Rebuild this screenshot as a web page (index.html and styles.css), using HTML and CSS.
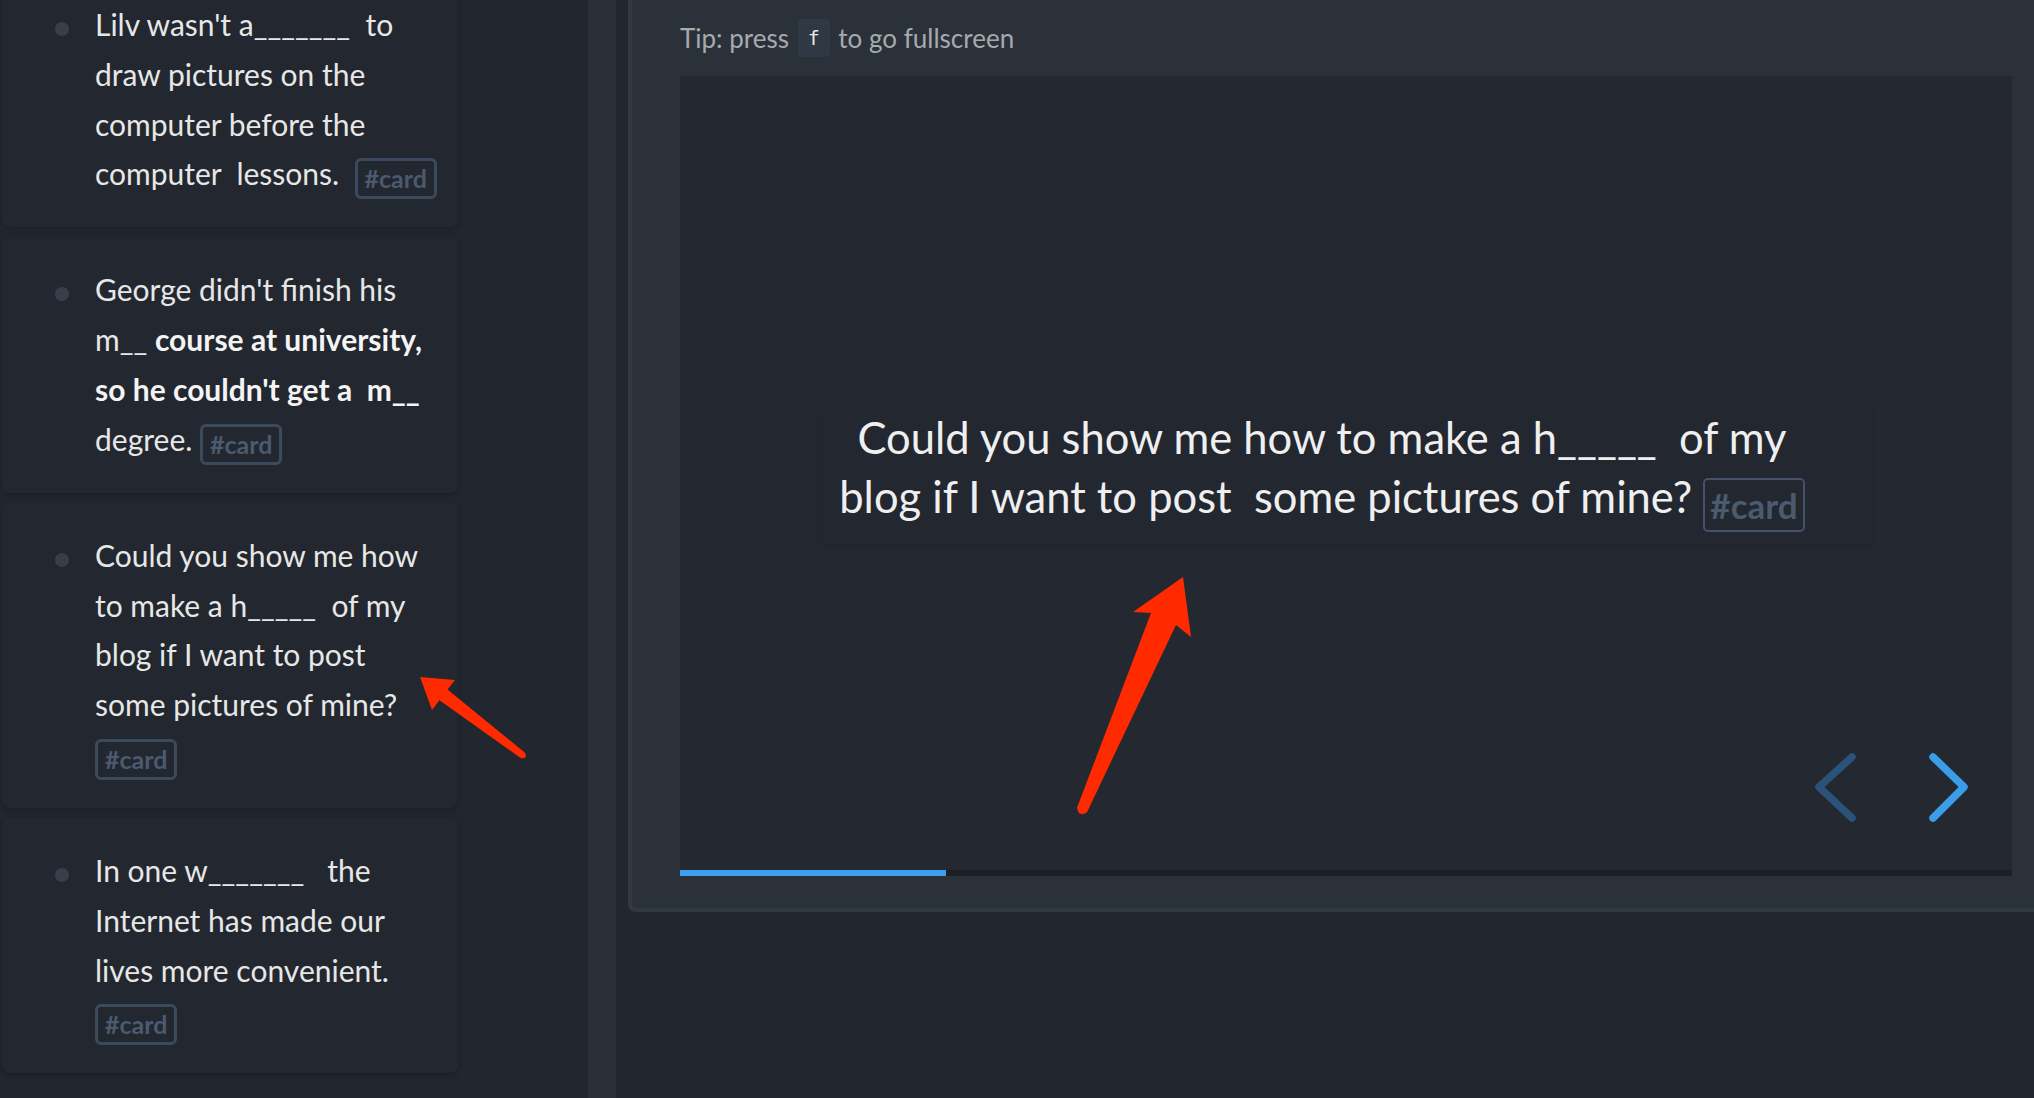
FILE: index.html
```html
<!DOCTYPE html>
<html lang="en">
<head>
<meta charset="utf-8">
<title>Flashcards</title>
<link rel="stylesheet" href="styles.css">
</head>
<body>
<div class="app">
  <aside class="sidebar">
    <div class="cards">
      <div class="card">
        <span class="bullet"></span>
        <div class="block-text">Lilv wasn't a_______  to draw pictures on the computer before the computer  lessons.  <span class="tag">#card</span></div>
      </div>
      <div class="card">
        <span class="bullet"></span>
        <div class="block-text">George didn't finish his m__ <b>course at university, so he couldn't get a  m__</b> degree. <span class="tag">#card</span></div>
      </div>
      <div class="card">
        <span class="bullet"></span>
        <div class="block-text">Could you show me how to make a h_____  of my blog if I want to post  some pictures of mine? <span class="tag">#card</span></div>
      </div>
      <div class="card">
        <span class="bullet"></span>
        <div class="block-text">In one w_______   the Internet has made our lives more convenient. <span class="tag">#card</span></div>
      </div>
    </div>
  </aside>
  <div class="rail"></div>
  <div class="gutter"></div>
  <main class="panel">
    <div class="tip">Tip: press <kbd>f</kbd> to go fullscreen</div>
    <section class="slide">
      <div class="stage">
        <div class="qcard"><div class="qtext">Could you show me how to make a h_____  of my blog if I want to post  some pictures of mine? <span class="tag tag-lg">#card</span></div></div>
      </div>
      <div class="progress"><div class="bar" style="width:20%"></div></div>
      <div class="nav">
        <svg class="nav-btn prev" width="48" height="72" viewBox="0 0 48 72"><path d="M40 6 L7 36 L40 67"/></svg>
        <svg class="nav-btn next" width="48" height="72" viewBox="0 0 48 72"><path d="M7 6 L38 36 L7 67"/></svg>
      </div>
    </section>
  </main>
</div>
<svg class="annotations" width="2034" height="1098" viewBox="0 0 2034 1098">
  <path d="M420 677 L455 680 L447.5 689.5 L525 752.7 Q528 758.5 521 758.3 L439.5 700.2 L432 710 Z"/>
  <path d="M1183 577 L1191 637 L1176 625 L1087 812.2 Q1079 818 1077 807.8 L1151 613 L1133 612 Z"/>
</svg>
</body>
</html>
```
FILE: styles.css
```css
* { box-sizing: border-box; }
html, body { margin: 0; padding: 0; }
body {
  width: 2034px;
  height: 1098px;
  overflow: hidden;
  position: relative;
  background: #22262e;
  font-family: Lato, "Open Sans", sans-serif;
}
.app {
  display: grid;
  grid-template-columns: 588px 28px 12px 1432px;
  height: 1098px;
  overflow: hidden;
}
.sidebar { background: #22262e; overflow: hidden; }
.cards {
  margin-top: -28px;
  padding-left: 2px;
  display: flex;
  flex-direction: column;
  gap: 10px;
}
.card {
  width: 456px;
  background: #23272f;
  border-radius: 8px;
  box-shadow: 0 2px 6px rgba(0, 0, 0, 0.22);
  padding: 28px 0;
  display: flex;
  align-items: flex-start;
}
.bullet {
  flex: none;
  width: 14px;
  height: 14px;
  border-radius: 50%;
  background: #37404a;
  margin: 22px 0 0 53px;
}
.block-text {
  margin-left: 26px;
  width: 348px;
  font-size: 30px;
  line-height: 49.8px;
  color: #e7e7e7;
  white-space: pre-wrap;
}
.block-text b { font-weight: 700; color: #f4f4f4; }
.tag {
  display: inline-block;
  border: 3px solid #3c4a5d;
  border-radius: 6px;
  color: #4a5a6f;
  font-weight: 700;
  font-size: 25px;
  line-height: 35px;
  padding: 0 7px;
  vertical-align: -3px;
  white-space: nowrap;
}
.rail { background: #2a3038; }
.gutter { background: #22262e; }
.panel {
  align-self: start;
  background: #2b3139;
  border-left: 4px solid #313943;
  border-bottom: 4px solid #313943;
  border-bottom-left-radius: 8px;
  padding: 0 48px 32px;
}
.tip {
  height: 76px;
  display: flex;
  align-items: center;
  font-size: 26px;
  color: #a6aaaf;
  white-space: pre;
}
kbd {
  display: inline-block;
  height: 38px;
  line-height: 38px;
  padding: 0 10px;
  margin: 0 2px;
  background: #2f3843;
  border-radius: 4px;
  font-family: "DejaVu Sans Mono", monospace;
  font-size: 20px;
  color: #e8e8e8;
}
.slide {
  position: relative;
  width: 1332px;
  height: 800px;
  background: #242831;
  display: flex;
  flex-direction: column;
}
.stage {
  flex: 1;
  display: flex;
  align-items: center;
  justify-content: center;
  padding-top: 7px;
}
.qcard {
  width: 1053px;
  height: 137px;
  background: #23272f;
  box-shadow: 0 2px 5px rgba(0, 0, 0, 0.12);
  padding: 0 58px 0 10px;
}
.qtext {
  font-size: 43.5px;
  line-height: 59px;
  color: #efefef;
  text-align: center;
  white-space: pre-wrap;
}
.tag-lg {
  border-width: 2px;
  border-color: #43526a;
  border-radius: 5px;
  font-size: 35px;
  line-height: 50px;
  padding: 0 5px;
  vertical-align: -6px;
}
.progress { height: 6px; background: #1c1f26; }
.bar { height: 100%; background: #3aa0ef; }
.nav {
  position: absolute;
  right: 38px;
  bottom: 53px;
  display: flex;
  gap: 66px;
}
.nav-btn path {
  fill: none;
  stroke-width: 7.5;
  stroke-linecap: round;
  stroke-linejoin: round;
}
.prev path { stroke: #2b5279; }
.next path { stroke: #3b9de8; }
.annotations {
  position: absolute;
  left: 0;
  top: 0;
  pointer-events: none;
}
.annotations path { fill: #ff2a00; }
```
